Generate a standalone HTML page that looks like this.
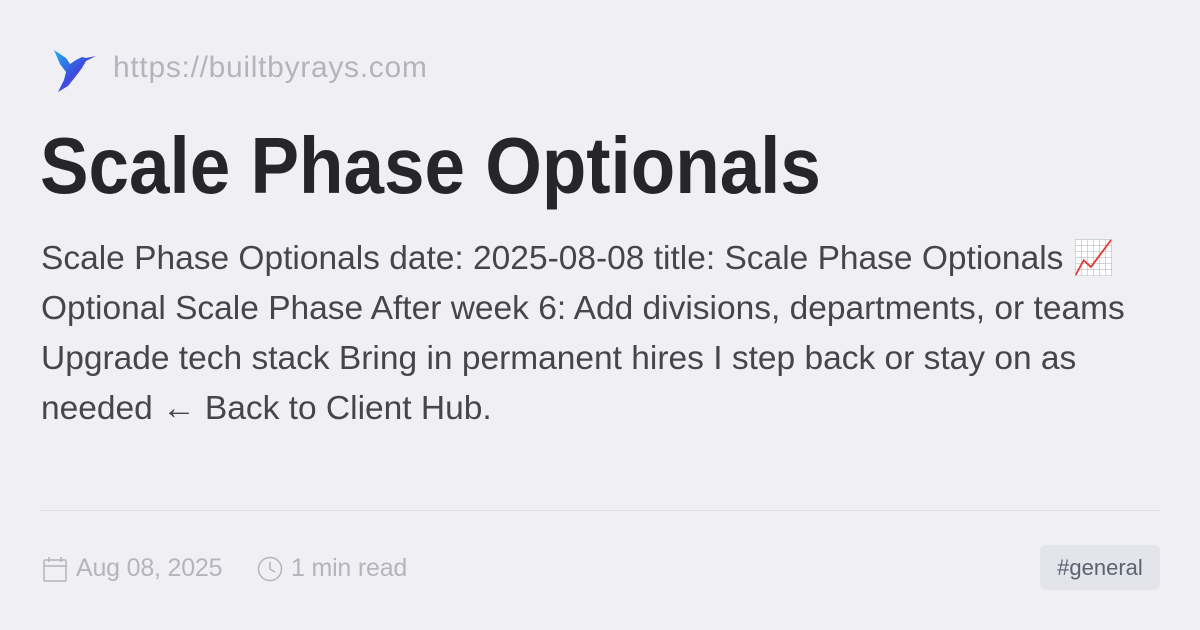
<!DOCTYPE html>
<html><head><meta charset="utf-8"><style>
body{margin:0;width:1200px;height:630px;background:#f0f0f4;font-family:"Liberation Sans",sans-serif;position:relative;overflow:hidden}
.logo{position:absolute;left:52px;top:48px}
.url{position:absolute;left:113px;top:51px;font-size:30px;color:#b4b4bc;letter-spacing:0.7px}
h1{position:absolute;left:40px;top:118px;margin:0;font-size:80px;font-weight:bold;color:#26262a;transform:scaleX(0.91);transform-origin:left top;white-space:nowrap;line-height:96px}
.body{position:absolute;left:41px;top:234px;font-size:33.5px;line-height:50px;color:#45454b;white-space:nowrap;letter-spacing:0}
.hr{position:absolute;left:40px;right:40px;top:510px;height:1px;background:#e0e0e6}
.meta{position:absolute;top:554px;font-size:25px;color:#b4b4bc;letter-spacing:-0.2px}
.tag{position:absolute;left:1040px;top:545px;width:120px;height:45px;background:#e3e5eb;border-radius:6px;color:#5a6370;font-size:22px;line-height:45px;text-align:center}
</style></head><body>
<svg class="logo" width="44" height="46" viewBox="0 0 44 46">
<defs><linearGradient id="g" x1="0" y1="0" x2="1" y2="1"><stop offset="0" stop-color="#1fb0f0"/><stop offset="0.5" stop-color="#3a4fe0"/><stop offset="1" stop-color="#8a2be2"/></linearGradient></defs>
<path d="M2 2 L14 10 L18 16 L24 12 L30 9 L34 10 L44 8 L34 13 L30 20 L24 28 L16 38 L6 44 L12 32 L14 24 L8 16 Z" fill="url(#g)"/>
</svg>
<div class="url">https://builtbyrays.com</div>
<h1>Scale Phase Optionals</h1>
<div class="body">Scale Phase Optionals date: 2025-08-08 title: Scale Phase Optionals 📈<br>Optional Scale Phase After week 6: Add divisions, departments, or teams<br>Upgrade tech stack Bring in permanent hires I step back or stay on as<br>needed ← Back to Client Hub.</div>
<div class="hr"></div>
<svg style="position:absolute;left:43px;top:556px" width="24" height="26" viewBox="0 0 24 26" fill="none" stroke="#b4b4bc" stroke-width="1.5"><rect x="1" y="4" width="22" height="21" rx="1"/><line x1="1" y1="10" x2="23" y2="10"/><line x1="6" y1="1" x2="6" y2="6"/><line x1="18" y1="1" x2="18" y2="6"/></svg>
<div class="meta" style="left:76px">Aug 08, 2025</div>
<svg style="position:absolute;left:257px;top:556px" width="26" height="26" viewBox="0 0 26 26" fill="none" stroke="#b4b4bc" stroke-width="1.5"><circle cx="13" cy="13" r="11.5"/><path d="M13 6 V13 L18 16"/></svg>
<div class="meta" style="left:291px">1 min read</div>
<div class="tag">#general</div>
</body></html>
